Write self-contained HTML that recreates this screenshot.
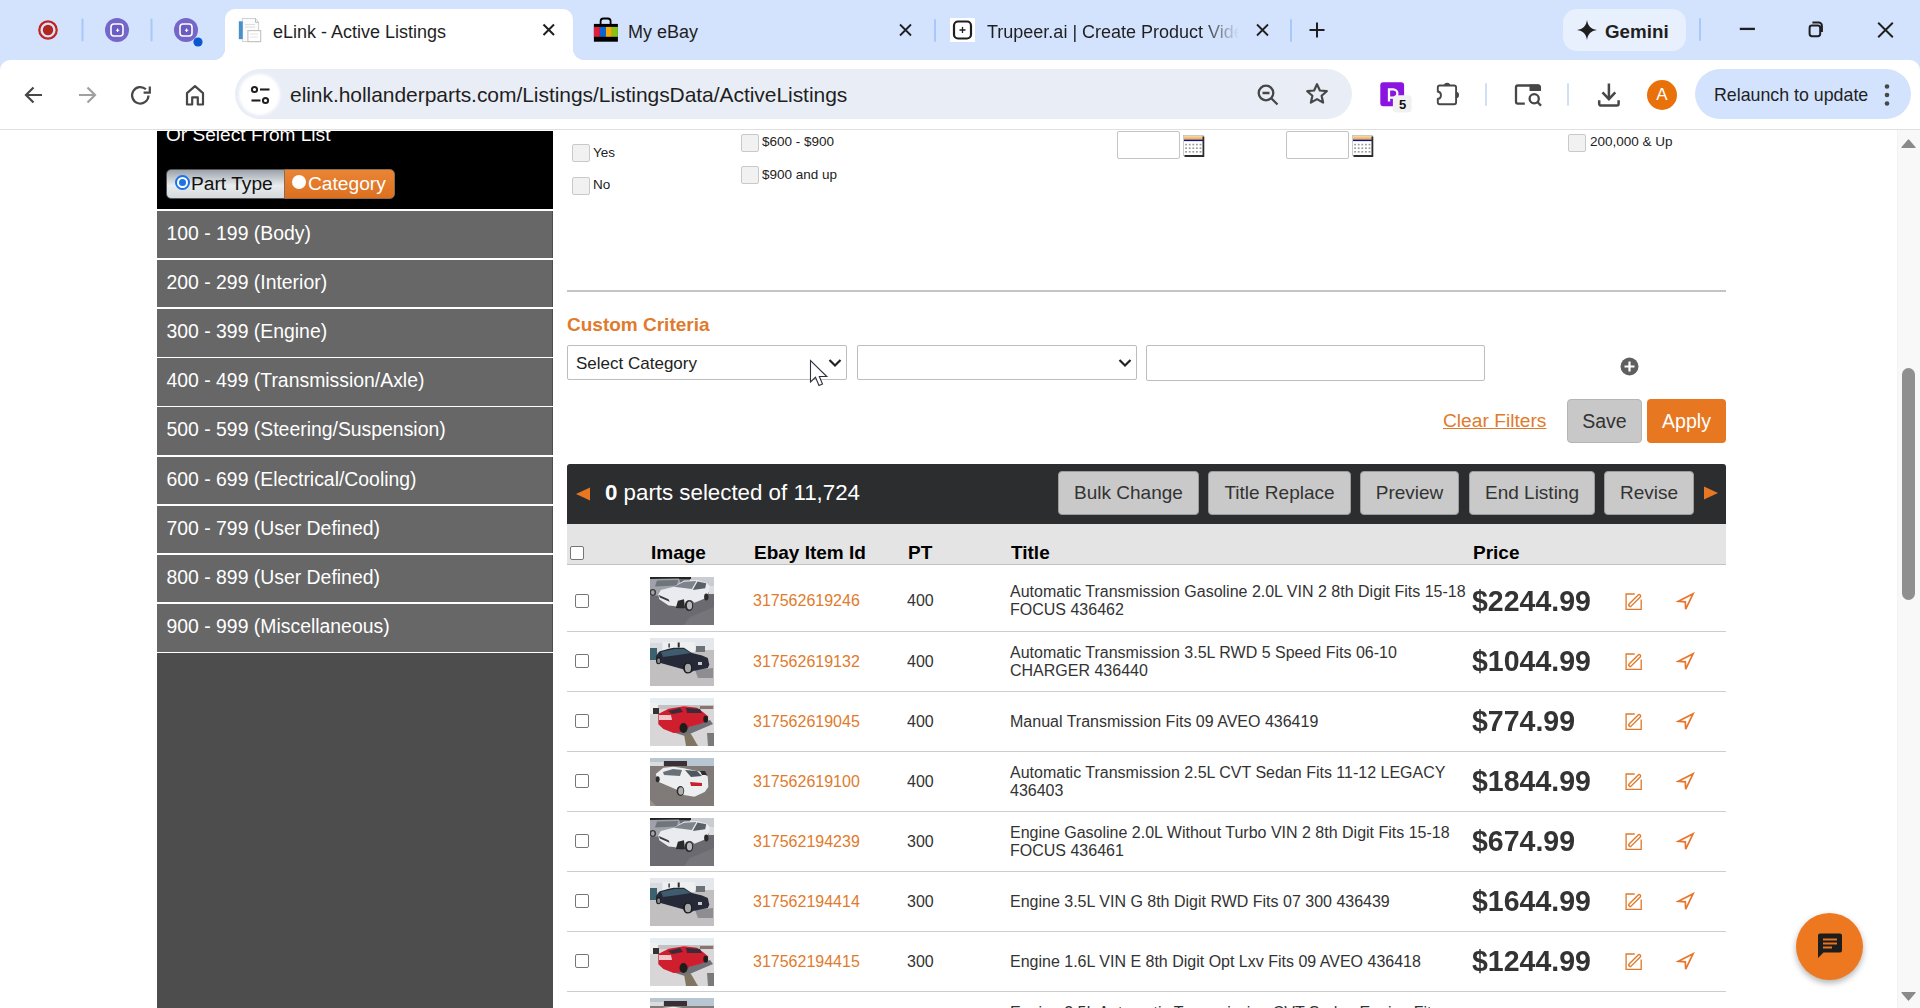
<!DOCTYPE html>
<html><head><meta charset="utf-8">
<style>
*{box-sizing:border-box;margin:0;padding:0}
html,body{width:1920px;height:1008px;overflow:hidden;background:#fff;font-family:"Liberation Sans",sans-serif}
.a{position:absolute}
#tabs{left:0;top:0;width:1920px;height:75px;background:#d3e3fd}
#toolbar{left:0;top:60px;width:1920px;height:70px;background:#fff;border-bottom:1px solid #e0e0e0;border-radius:10px 10px 0 0}
.ttl{font-size:17.5px;color:#1f1f1f;white-space:nowrap;line-height:20px}
.sep{width:2px;background:#a8c7fa;border-radius:1px}
#page{left:0;top:130px;width:1920px;height:878px;background:#fff;overflow:hidden}
.side{left:157px;width:396px}
.item{left:157px;width:395px;height:47px;background:#676767;color:#fff;font-size:19.4px;line-height:45px;padding-left:9.5px;white-space:nowrap}
.cb{width:18px;height:18px;border:1px solid #c9c9c9;background:#f1f1f1;border-radius:2px}
.sm{font-size:13.5px;color:#222;white-space:nowrap;line-height:16px}
.row{left:567px;width:1159px;border-bottom:1px solid #c8c8c8}
.rcb{width:14px;height:14px;border:1.5px solid #767676;border-radius:2px;background:#fff}
.pid{font-size:16px;color:#e07b2d;line-height:18px;white-space:nowrap}
.pt{font-size:16px;color:#333;line-height:18px}
.tt{font-size:16px;color:#333;line-height:18px;white-space:nowrap}
.pr{font-size:30px;font-weight:bold;color:#333;line-height:32px;white-space:nowrap;transform:scaleX(0.95);transform-origin:0 0}
.btn{height:44px;background:#c9c9c9;border:1px solid #9c9c9c;border-radius:4px;font-size:19px;color:#333;text-align:center;line-height:42px;white-space:nowrap}
.th{font-size:19px;font-weight:bold;color:#000;line-height:20px;white-space:nowrap}
</style></head><body>
<!-- TAB STRIP -->
<div id="tabs" class="a"></div>
<!-- active tab -->
<div class="a" style="left:225px;top:9px;width:348px;height:55px;background:#fff;border-radius:10px 10px 0 0"></div>
<div class="a" style="left:213px;top:48px;width:12px;height:12px;background:radial-gradient(circle at 0 0,#d3e3fd 12px,#fff 12.5px)"></div>
<div class="a" style="left:573px;top:48px;width:12px;height:12px;background:radial-gradient(circle at 100% 0,#d3e3fd 12px,#fff 12.5px)"></div>
<div id="toolbar" class="a"></div>

<!-- pinned tabs -->
<svg class="a" style="left:0;top:0" width="225" height="60">
  <circle cx="48" cy="30" r="8.7" fill="none" stroke="#c5221f" stroke-width="2.2"/>
  <circle cx="48" cy="30" r="5.2" fill="#b3261e"/>
  <rect x="81.5" y="18.5" width="2" height="23" rx="1" fill="#a8c7fa"/>
  <circle cx="117" cy="30" r="12" fill="#7467c9"/>
  <rect x="111" y="24" width="12" height="12" rx="3" fill="#6a5cc0" stroke="#fff" stroke-width="1.6"/>
  <path d="M117.6 28.6v3.4M115.9 30.3h3.4" stroke="#fff" stroke-width="1.1"/>
  <rect x="150.5" y="18.5" width="2" height="23" rx="1" fill="#a8c7fa"/>
  <circle cx="186" cy="30" r="12" fill="#7467c9"/>
  <rect x="180" y="24" width="12" height="12" rx="3" fill="#6a5cc0" stroke="#fff" stroke-width="1.6"/>
  <path d="M186.6 28.6v3.4M184.9 30.3h3.4" stroke="#fff" stroke-width="1.1"/>
  <circle cx="198" cy="42" r="4.6" fill="#0b57d0"/>
</svg>
<!-- active tab favicon -->
<svg class="a" style="left:236px;top:17px" width="28" height="28">
  <path d="M6.3 1.5H19.5L22.6 5.4V24.6H6.3z" fill="#fbfbfb" stroke="#c9c9c9" stroke-width="0.9"/>
  <path d="M19.5 1.5v3.9h3.1" fill="none" stroke="#b5b5b5" stroke-width="0.9"/>
  <path d="M9 7.5h10M9 10h10" stroke="#dedede" stroke-width="1.2"/>
  <rect x="2.3" y="3.8" width="5" height="18.8" fill="#e6f4fb"/>
  <rect x="2.9" y="4.3" width="3.9" height="17.8" fill="#4a90c8"/>
  <rect x="11.9" y="13.6" width="12.8" height="11" fill="#fff" stroke="#c2c2c2" stroke-width="1.1"/>
  <path d="M14 17h8M14 20h8" stroke="#e2e2e2" stroke-width="1"/>
</svg>
<div class="a ttl" style="left:273px;top:22px;font-size:18px">eLink - Active Listings</div>
<svg class="a" style="left:541px;top:22px" width="16" height="16"><path d="M2.5 2.5l10.5 10.5M13 2.5L2.5 13" stroke="#1f1f1f" stroke-width="2"/></svg>
<!-- my ebay tab -->
<svg class="a" style="left:592px;top:16px" width="28" height="28">
  <path d="M8.6 8.2V5.3a2.8 2.8 0 0 1 2.8-2.8h4.4a2.8 2.8 0 0 1 2.8 2.8v2.9" fill="none" stroke="#000" stroke-width="1.8"/>
  <rect x="1.9" y="7.9" width="24" height="17.8" fill="#000"/>
  <rect x="1.9" y="10.9" width="6" height="9.9" fill="#e0203a"/>
  <rect x="7.9" y="10.9" width="6" height="9.9" fill="#0a64d8"/>
  <rect x="13.9" y="10.9" width="6" height="9.9" fill="#f2ad0a"/>
  <rect x="19.9" y="10.9" width="6" height="9.9" fill="#86c21a"/>
</svg>
<div class="a ttl" style="left:628px;top:22px;font-size:18px">My eBay</div>
<svg class="a" style="left:898px;top:22px" width="16" height="16"><path d="M2 2.5l11 11M13 2.5L2 13.5" stroke="#1f1f1f" stroke-width="1.8"/></svg>
<div class="a sep" style="left:934px;top:19px;height:23px"></div>
<!-- trupeer tab -->
<svg class="a" style="left:950px;top:18px" width="26" height="25">
  <rect x="0" y="0" width="25" height="24" fill="#fff"/>
  <rect x="4" y="3.5" width="17" height="17" rx="4" fill="none" stroke="#1f1f1f" stroke-width="2.2"/>
  <path d="M12.5 9v6M9.5 12h6" stroke="#1f1f1f" stroke-width="1.3"/>
</svg>
<div class="a ttl" style="left:987px;top:22px;font-size:18px;width:252px;overflow:hidden;-webkit-mask-image:linear-gradient(90deg,#000 85%,transparent)">Trupeer.ai | Create Product Videos</div>
<svg class="a" style="left:1255px;top:22px" width="16" height="16"><path d="M2 2.5l11 11M13 2.5L2 13.5" stroke="#1f1f1f" stroke-width="1.8"/></svg>
<div class="a sep" style="left:1290px;top:19px;height:23px"></div>
<svg class="a" style="left:1308px;top:21px" width="18" height="18"><path d="M9 1.5v15M1.5 9h15" stroke="#1f1f1f" stroke-width="2"/></svg>
<!-- gemini -->
<div class="a" style="left:1563px;top:9px;width:123px;height:42px;border-radius:14px;background:#e8effd"></div>
<svg class="a" style="left:1576px;top:19px" width="22" height="22"><path d="M11 1 C11.8 7 15 10.2 21 11 C15 11.8 11.8 15 11 21 C10.2 15 7 11.8 1 11 C7 10.2 10.2 7 11 1Z" fill="#1f1f1f"/></svg>
<div class="a" style="left:1605px;top:21px;font-size:18.8px;font-weight:bold;color:#1f1f1f;line-height:22px">Gemini</div>
<div class="a sep" style="left:1699px;top:18px;height:23px"></div>
<svg class="a" style="left:1730px;top:12px" width="180" height="36">
  <path d="M9.8 16.9h15.1" stroke="#1f1f1f" stroke-width="2.3"/>
  <rect x="79.6" y="13.6" width="10.6" height="10.6" rx="2.4" fill="none" stroke="#1f1f1f" stroke-width="2"/>
  <path d="M82.4 10.6h6.3a3.2 3.2 0 0 1 3.2 3.2v6.3" fill="none" stroke="#1f1f1f" stroke-width="2"/>
  <path d="M148.2 10.8l14.6 14.4M162.8 10.8l-14.6 14.4" stroke="#1f1f1f" stroke-width="2"/>
</svg>
<!-- TOOLBAR icons -->
<svg class="a" style="left:0;top:60px" width="230" height="70">
  <path d="M42 35H26M33.5 27.5L26 35l7.5 7.5" fill="none" stroke="#474747" stroke-width="2.2"/>
  <path d="M79 35h16M87.5 27.5L95 35l-7.5 7.5" fill="none" stroke="#a0a0a0" stroke-width="2.2"/>
  <path d="M148.5 35.5a8.2 8.2 0 1 1 -2.6 -6.2" fill="none" stroke="#474747" stroke-width="2.2"/>
  <path d="M149.8 26.5v6.2h-6.2" fill="none" stroke="#474747" stroke-width="2.2"/>
  <path d="M187 44.5V33.2l8-7 8 7v11.3h-5.2v-7.2h-5.6v7.2z" fill="none" stroke="#474747" stroke-width="2.2" stroke-linejoin="round"/>
</svg>
<div class="a" style="left:235px;top:69px;width:1117px;height:50px;border-radius:25px;background:#e9eef6"></div>
<div class="a" style="left:241px;top:76px;width:37px;height:37px;border-radius:50%;background:#fff;box-shadow:0 0 3px 2px #fff"></div>
<svg class="a" style="left:250px;top:85px" width="24" height="22">
  <circle cx="4.5" cy="4.5" r="2.6" fill="none" stroke="#1f1f1f" stroke-width="2"/>
  <path d="M10 4.5h9.5" stroke="#1f1f1f" stroke-width="2.1"/>
  <circle cx="15.5" cy="15.5" r="2.6" fill="none" stroke="#1f1f1f" stroke-width="2"/>
  <path d="M1.5 15.5h9" stroke="#1f1f1f" stroke-width="2.1"/>
</svg>
<div class="a" style="left:290px;top:83px;font-size:21px;color:#1f1f1f;line-height:24px;white-space:nowrap;letter-spacing:-0.05px">elink.hollanderparts.com/Listings/ListingsData/ActiveListings</div>
<svg class="a" style="left:1254px;top:80px" width="80" height="30">
  <circle cx="12" cy="13" r="7.3" fill="none" stroke="#474747" stroke-width="2.3"/>
  <path d="M17.5 18.5l6 6M8.5 13h7" stroke="#474747" stroke-width="2.3"/>
  <path d="M63 4.2l2.9 6.3 6.9.7-5.2 4.6 1.5 6.8L63 19.1l-6.1 3.5 1.5-6.8-5.2-4.6 6.9-.7z" fill="none" stroke="#474747" stroke-width="2.2" stroke-linejoin="round"/>
</svg>
<!-- extensions -->
<svg class="a" style="left:1378px;top:80px" width="40" height="36">
  <rect x="2.3" y="2.3" width="23.8" height="24" rx="3" fill="#8a14e0"/>
  <path d="M11 21.5V9.3h4.2a4.2 4.2 0 0 1 0 8.4H11" fill="none" stroke="#fff" stroke-width="2.3"/>
  <rect x="14.9" y="15.3" width="18.8" height="17.2" rx="4" fill="#f1f1f1"/>
</svg>
<div class="a" style="left:1393px;top:97px;width:19px;font-size:13px;font-weight:bold;color:#111;text-align:center;line-height:16px">5</div>
<svg class="a" style="left:1430px;top:78px" width="36" height="34">
  <path d="M9.8 7.5H24.1a2 2 0 0 1 2 2V24.3a2 2 0 0 1-2 2H9.8a2 2 0 0 1-2-2V21a3.8 3.8 0 0 0 0-7.5V9.5a2 2 0 0 1 2-2z" fill="none" stroke="#474747" stroke-width="1.9"/>
  <path d="M14 7.8a3.1 3.1 0 0 1 6.2 0z" fill="#474747"/>
  <path d="M25.8 13.8a3.2 3.2 0 0 1 0 6.4z" fill="#474747"/>
</svg>
<div class="a" style="left:1485px;top:83px;width:2px;height:23px;border-radius:1px;background:#d0def6"></div>
<svg class="a" style="left:1512px;top:82px" width="34" height="28">
  <path d="M12.8 21.6H5.8a1.8 1.8 0 0 1-1.8-1.8V5.3a1.8 1.8 0 0 1 1.8-1.8h20.3a1.8 1.8 0 0 1 1.8 1.8v3.5" fill="none" stroke="#474747" stroke-width="2.3"/>
  <path d="M17.5 2.5h8.7a2.5 2.5 0 0 1 2.5 2.5v4h-11.2z" fill="#474747"/>
  <circle cx="22.2" cy="16.7" r="4.6" fill="none" stroke="#474747" stroke-width="2.3"/>
  <path d="M25.5 20l3.5 3.7" stroke="#474747" stroke-width="2.4"/>
</svg>
<div class="a" style="left:1567px;top:83px;width:2px;height:23px;border-radius:1px;background:#d0def6"></div>
<svg class="a" style="left:1594px;top:80px" width="30" height="30">
  <path d="M14.9 3.4v15.8M8.5 12.3l6.4 6.9 6.4-6.9" fill="none" stroke="#474747" stroke-width="2.5"/>
  <path d="M5.2 20.2v3.6a1.8 1.8 0 0 0 1.8 1.8h15.8a1.8 1.8 0 0 0 1.8-1.8v-3.6" fill="none" stroke="#474747" stroke-width="2.5"/>
</svg>
<div class="a" style="left:1647px;top:80px;width:30px;height:30px;border-radius:50%;background:#e8710a;color:#fff;font-size:17px;text-align:center;line-height:30px;-webkit-text-stroke:0px">A</div>
<div class="a" style="left:1695px;top:69px;width:216px;height:50px;border-radius:25px;background:#d3e3fd"></div>
<div class="a" style="left:1714px;top:83.5px;font-size:17.8px;color:#1f1f1f;line-height:22px;white-space:nowrap">Relaunch to update</div>
<svg class="a" style="left:1880px;top:80px" width="14" height="30"><circle cx="7" cy="6.5" r="2.3" fill="#474747"/><circle cx="7" cy="15" r="2.3" fill="#474747"/><circle cx="7" cy="23.5" r="2.3" fill="#474747"/></svg>


<!-- PAGE -->
<div id="page" class="a">
</div>
<!-- sidebar -->
<div class="a" style="left:157px;top:131px;width:396px;height:78px;background:#000;overflow:hidden"><div class="a" style="left:9px;top:-7px;font-size:19.1px;color:#fff;line-height:22px;white-space:nowrap">Or Select From List</div></div>
<div class="a" style="left:166px;top:169px;width:119px;height:30px;border-radius:5px 0 0 5px;background:linear-gradient(#9aa1a8,#e9ecee 55%,#d5d9dc);border:1px solid #555"></div>
<div class="a" style="left:284px;top:169px;width:111px;height:30px;border-radius:0 5px 5px 0;background:linear-gradient(#e98535,#dc7020);border:1px solid #8a6a50"></div>
<div class="a" style="left:175px;top:175px;width:15px;height:15px;border-radius:50%;background:#fff;border:2.5px solid #1a73e8"><div style="margin:1.5px;width:7px;height:7px;border-radius:50%;background:#1a73e8"></div></div>
<div class="a" style="left:191px;top:173px;font-size:19.2px;color:#111;line-height:22px">Part Type</div>
<div class="a" style="left:292px;top:175px;width:14px;height:14px;border-radius:50%;background:#fff"></div>
<div class="a" style="left:308px;top:173px;font-size:19.2px;color:#fff;line-height:22px">Category</div>
<div class="a" style="left:157px;top:209px;width:396px;height:2px;background:#fff"></div>
<div class="a" style="left:157px;top:211px;width:396px;height:797px;background:#4d4d4d"></div>
<div class="a item" style="top:211px;height:47px;line-height:45px">100 - 199 (Body)</div><div class="a" style="left:157px;top:258px;width:396px;height:2px;background:#fff"></div>
<div class="a item" style="top:260px;height:47px;line-height:45px">200 - 299 (Interior)</div><div class="a" style="left:157px;top:307px;width:396px;height:2px;background:#fff"></div>
<div class="a item" style="top:309px;height:48px;line-height:45px">300 - 399 (Engine)</div><div class="a" style="left:157px;top:357px;width:396px;height:1px;background:#fff"></div>
<div class="a item" style="top:358px;height:48px;line-height:45px">400 - 499 (Transmission/Axle)</div><div class="a" style="left:157px;top:406px;width:396px;height:1px;background:#fff"></div>
<div class="a item" style="top:407px;height:48px;line-height:45px">500 - 599 (Steering/Suspension)</div><div class="a" style="left:157px;top:455px;width:396px;height:2px;background:#fff"></div>
<div class="a item" style="top:457px;height:47px;line-height:45px">600 - 699 (Electrical/Cooling)</div><div class="a" style="left:157px;top:504px;width:396px;height:2px;background:#fff"></div>
<div class="a item" style="top:506px;height:47px;line-height:45px">700 - 799 (User Defined)</div><div class="a" style="left:157px;top:553px;width:396px;height:2px;background:#fff"></div>
<div class="a item" style="top:555px;height:47px;line-height:45px">800 - 899 (User Defined)</div><div class="a" style="left:157px;top:602px;width:396px;height:2px;background:#fff"></div>
<div class="a item" style="top:604px;height:48px;line-height:45px">900 - 999 (Miscellaneous)</div><div class="a" style="left:157px;top:652px;width:396px;height:1px;background:#fff"></div>


<!-- filter top -->
<div class="a cb" style="left:572px;top:144px"></div><div class="a sm" style="left:593px;top:145px">Yes</div>
<div class="a cb" style="left:572px;top:177px"></div><div class="a sm" style="left:593px;top:177px">No</div>
<div class="a cb" style="left:741px;top:134px"></div><div class="a sm" style="left:762px;top:134px">$600 - $900</div>
<div class="a cb" style="left:741px;top:166px"></div><div class="a sm" style="left:762px;top:167px">$900 and up</div>
<div class="a" style="left:1117px;top:131px;width:63px;height:28px;border:1px solid #c4c4c4;border-radius:2px;background:#fff"></div>
<div class="a" style="left:1286px;top:131px;width:63px;height:28px;border:1px solid #c4c4c4;border-radius:2px;background:#fff"></div>
<svg class="a" style="left:1183px;top:135px" width="22" height="22"><defs><linearGradient id="cg" x1="0" y1="0" x2="0" y2="1"><stop offset="0" stop-color="#f8dca0"/><stop offset="1" stop-color="#eea548"/></linearGradient></defs><rect x="0.5" y="0.5" width="20" height="20" fill="#fff" stroke="#bdbdbd" stroke-width="0.8"/><rect x="1" y="1" width="19" height="3.6" fill="url(#cg)"/><rect x="1" y="4.6" width="19" height="1.5" fill="#10108a"/><rect x="2.2" y="8.8" width="1.8" height="1.6" fill="#9a9a9a"/><rect x="2.2" y="12.4" width="1.8" height="1.6" fill="#9a9a9a"/><rect x="2.2" y="16" width="1.8" height="1.6" fill="#9a9a9a"/><rect x="5.8" y="8.8" width="1.8" height="1.6" fill="#9a9a9a"/><rect x="5.8" y="12.4" width="1.8" height="1.6" fill="#9a9a9a"/><rect x="5.8" y="16" width="1.8" height="1.6" fill="#9a9a9a"/><rect x="9.4" y="8.8" width="1.8" height="1.6" fill="#9a9a9a"/><rect x="9.4" y="12.4" width="1.8" height="1.6" fill="#9a9a9a"/><rect x="9.4" y="16" width="1.8" height="1.6" fill="#9a9a9a"/><rect x="13" y="8.8" width="1.8" height="1.6" fill="#9a9a9a"/><rect x="13" y="12.4" width="1.8" height="1.6" fill="#9a9a9a"/><rect x="13" y="16" width="1.8" height="1.6" fill="#9a9a9a"/><rect x="16.6" y="8.8" width="1.8" height="1.6" fill="#9a9a9a"/><rect x="16.6" y="12.4" width="1.8" height="1.6" fill="#9a9a9a"/><rect x="16.6" y="16" width="1.8" height="1.6" fill="#9a9a9a"/><path d="M20.4 1.5v19.5H1.5" fill="none" stroke="#2e2e2e" stroke-width="1.8"/></svg>
<svg class="a" style="left:1352px;top:135px" width="22" height="22"><defs><linearGradient id="cg" x1="0" y1="0" x2="0" y2="1"><stop offset="0" stop-color="#f8dca0"/><stop offset="1" stop-color="#eea548"/></linearGradient></defs><rect x="0.5" y="0.5" width="20" height="20" fill="#fff" stroke="#bdbdbd" stroke-width="0.8"/><rect x="1" y="1" width="19" height="3.6" fill="url(#cg)"/><rect x="1" y="4.6" width="19" height="1.5" fill="#10108a"/><rect x="2.2" y="8.8" width="1.8" height="1.6" fill="#9a9a9a"/><rect x="2.2" y="12.4" width="1.8" height="1.6" fill="#9a9a9a"/><rect x="2.2" y="16" width="1.8" height="1.6" fill="#9a9a9a"/><rect x="5.8" y="8.8" width="1.8" height="1.6" fill="#9a9a9a"/><rect x="5.8" y="12.4" width="1.8" height="1.6" fill="#9a9a9a"/><rect x="5.8" y="16" width="1.8" height="1.6" fill="#9a9a9a"/><rect x="9.4" y="8.8" width="1.8" height="1.6" fill="#9a9a9a"/><rect x="9.4" y="12.4" width="1.8" height="1.6" fill="#9a9a9a"/><rect x="9.4" y="16" width="1.8" height="1.6" fill="#9a9a9a"/><rect x="13" y="8.8" width="1.8" height="1.6" fill="#9a9a9a"/><rect x="13" y="12.4" width="1.8" height="1.6" fill="#9a9a9a"/><rect x="13" y="16" width="1.8" height="1.6" fill="#9a9a9a"/><rect x="16.6" y="8.8" width="1.8" height="1.6" fill="#9a9a9a"/><rect x="16.6" y="12.4" width="1.8" height="1.6" fill="#9a9a9a"/><rect x="16.6" y="16" width="1.8" height="1.6" fill="#9a9a9a"/><path d="M20.4 1.5v19.5H1.5" fill="none" stroke="#2e2e2e" stroke-width="1.8"/></svg>
<div class="a cb" style="left:1568px;top:134px"></div><div class="a sm" style="left:1590px;top:134px">200,000 &amp; Up</div>
<div class="a" style="left:567px;top:290px;width:1159px;height:2px;background:#c4c4c4"></div>
<!-- custom criteria -->
<div class="a" style="left:567px;top:314px;font-size:19px;font-weight:bold;color:#e07b2d;line-height:22px;white-space:nowrap">Custom Criteria</div>
<div class="a" style="left:567px;top:345px;width:280px;height:35px;border:1px solid #bdbdbd;border-radius:2px;background:#fff"></div>
<div class="a" style="left:576px;top:354px;font-size:17px;color:#222;line-height:20px;white-space:nowrap">Select Category</div>
<svg class="a" style="left:825.5px;top:356px" width="18" height="14"><path d="M3.5 4l5.5 5.5 5.5-5.5" fill="none" stroke="#222" stroke-width="2.2"/></svg>
<div class="a" style="left:857px;top:345px;width:280px;height:35px;border:1px solid #bdbdbd;border-radius:2px;background:#fff"></div>
<svg class="a" style="left:1115.5px;top:356px" width="18" height="14"><path d="M3.5 4l5.5 5.5 5.5-5.5" fill="none" stroke="#222" stroke-width="2.2"/></svg>
<div class="a" style="left:1146px;top:345px;width:339px;height:36px;border:1px solid #bdbdbd;border-radius:2px;background:#fff"></div>
<svg class="a" style="left:1619px;top:356px" width="22" height="22"><circle cx="10.5" cy="10.5" r="9" fill="#5f5f5f"/><path d="M10.5 5.5v10M5.5 10.5h10" stroke="#fff" stroke-width="2.2"/></svg>
<div class="a" style="left:1443px;top:410px;font-size:19.2px;color:#e07b2d;line-height:22px;text-decoration:underline;white-space:nowrap">Clear Filters</div>
<div class="a" style="left:1567px;top:399px;width:75px;height:44px;border-radius:4px;background:#c8c8c8;border:1px solid #b5b5b5;font-size:19.5px;color:#333;text-align:center;line-height:42px">Save</div>
<div class="a" style="left:1647px;top:399px;width:79px;height:44px;border-radius:4px;background:#e87722;font-size:19.5px;color:#fff;text-align:center;line-height:44px">Apply</div>
<!-- dark bar -->
<div class="a" style="left:567px;top:464px;width:1159px;height:60px;background:#2c2d2f;border-radius:3px 3px 0 0"></div>
<svg class="a" style="left:574px;top:486px" width="18" height="16"><path d="M2 8L16 1.5v13z" fill="#e87722"/></svg>
<div class="a" style="left:605px;top:480px;font-size:22.3px;color:#fff;line-height:26px;white-space:nowrap"><b>0</b> parts selected of 11,724</div>
<div class="a btn" style="left:1058px;top:471px;width:141px">Bulk Change</div>
<div class="a btn" style="left:1208px;top:471px;width:143px">Title Replace</div>
<div class="a btn" style="left:1360px;top:471px;width:99px">Preview</div>
<div class="a btn" style="left:1469px;top:471px;width:126px">End Listing</div>
<div class="a btn" style="left:1604px;top:471px;width:90px">Revise</div>
<svg class="a" style="left:1702px;top:485px" width="18" height="16"><path d="M16 8L2 1.5v13z" fill="#e87722"/></svg>
<!-- header -->
<div class="a" style="left:567px;top:524px;width:1159px;height:41px;background:#e4e4e4;border-bottom:1px solid #c2c2c2"></div>
<div class="a" style="left:570px;top:546px;width:14px;height:14px;border:1.5px solid #767676;border-radius:2px;background:#fff"></div>
<div class="a th" style="left:651px;top:543px">Image</div>
<div class="a th" style="left:754px;top:543px">Ebay Item Id</div>
<div class="a th" style="left:908px;top:543px">PT</div>
<div class="a th" style="left:1011px;top:543px">Title</div>
<div class="a th" style="left:1473px;top:543px">Price</div>


<svg width="0" height="0" style="position:absolute">
<defs>
<symbol id="tA" viewBox="0 0 64 48">
  <rect width="64" height="48" fill="#6b6a70"/>
  <rect x="40" y="0" width="24" height="15" fill="#c9ccd0"/>
  <rect x="0" y="0" width="41" height="2" fill="#222"/>
  <path d="M0 2L29 1.5 31 7 30 16 8 18.5 0 19z" fill="#9da3a8"/>
  <path d="M7 3.5L28 3 27 8.5 5 9.5z" fill="#6f757b"/>
  <ellipse cx="2.8" cy="15.5" rx="3.3" ry="3.6" fill="#3b3b3b"/><ellipse cx="2.8" cy="15.5" rx="1.8" ry="2.2" fill="#a0a4a8"/>
  <path d="M59 9h5v8h-5z" fill="#dcdde0"/>
  <path d="M8.3 17.5L10.8 12.9 23.7 9.8 34 3.6 46.9 3.1 56.8 5.7 59.9 9.3 58.8 14.9 57.3 20.6 44.4 25.8 40.8 22.7 37.1 26.8 35.1 31.5 23.7 28.9 18.6 28.4 9.3 22.2z" fill="#e9ebee"/>
  <path d="M23.7 9.8L34 4.8 46.4 4.1 41.8 11.9z" fill="#7d848b"/>
  <path d="M42.8 13L47.5 4.6 56.2 6.2 55.2 11.3z" fill="#5a6068"/>
  <path d="M8.8 18L18.6 22.2 19.6 24.8 9.8 20.6z" fill="#3a3c40"/>
  <path d="M27.9 23.7L34 22.2 35.1 31.5 25.8 31z" fill="#2a2a2c"/>
  <ellipse cx="39" cy="28.5" rx="4.2" ry="5.6" fill="#2a2a2a"/><ellipse cx="39.5" cy="28.5" rx="2.6" ry="4" fill="#b8babd"/>
  <ellipse cx="56.3" cy="20" rx="2.2" ry="3.4" fill="#2a2a2a"/>
  <path d="M40 40L64 30V48H34z" fill="#76757a"/>
</symbol>
<symbol id="tB" viewBox="0 0 64 48">
  <rect width="64" height="48" fill="#c2bfc0"/>
  <rect width="64" height="12" fill="#e4e8ec"/>
  <rect x="13" y="4" width="32" height="10" fill="#eef0f0"/>
  <rect x="27.7" y="4.5" width="2" height="5" fill="#2a2a2a"/><rect x="18.4" y="5.5" width="1.4" height="4" fill="#333"/>
  <rect x="0" y="5" width="12" height="9" fill="#d8dbdd"/>
  <path d="M46 8h9v6h-9z" fill="#6d7074"/>
  <path d="M0 10h7v12H0z" fill="#3c6270"/>
  <path d="M45 32L63 30V40H48z" fill="#8e8d92"/>
  <path d="M5.7 18.6L9.3 13.4 18.6 10.8 23.7 9.8 34 9.8 41.8 15 52.1 17.5 57.8 20.1 59.3 26.8 57.8 29.9 43.3 33 40.2 35.1 34 31.5 11.4 25.3 6.7 22.7z" fill="#262938"/>
  <path d="M11 14L24 11 34 11 41 15 28 17 13 19z" fill="#3f5c6e"/>
  <path d="M48 24h4v3h-4z" fill="#c9c9c9"/>
  <ellipse cx="37.7" cy="30" rx="4.6" ry="5.6" fill="#1b1b1b"/><ellipse cx="38" cy="30" rx="3.1" ry="4.2" fill="#a4a6aa"/>
  <ellipse cx="8.5" cy="22.7" rx="2.5" ry="3.6" fill="#1b1b1b"/><ellipse cx="8.7" cy="22.7" rx="1.5" ry="2.5" fill="#8a8a8a"/>
</symbol>
<symbol id="tC" viewBox="0 0 64 48">
  <rect width="64" height="48" fill="#d8d6d6"/>
  <rect width="64" height="8" fill="#e6eef2"/>
  <rect y="7" width="64" height="4" fill="#c4c1c0"/>
  <path d="M0 5h8v11H0z" fill="#f0f0f0"/><path d="M3 10h6v6H3z" fill="#333"/>
  <path d="M50 8h13v3H50z" fill="#8a7575"/>
  <path d="M22 34L60 22 63 26 35 38z" fill="#6f7078"/>
  <path d="M34 36h7l7 12H36z" fill="#807560"/>
  <path d="M57 35h7v13h-6z" fill="#7a7a7a"/>
  <path d="M8.3 16L18.6 10.8 34 8.3 46.9 9.8 53.6 14.4 58.3 18.6 57.3 23.7 39.2 28.9 34 34 23.7 35.1 13.4 30.9 8.3 26.3z" fill="#cf1e2e"/>
  <path d="M18 13L30 10 33 14 22 16z" fill="#3a2a3a"/><path d="M36 10L50 11 52 15 37 15z" fill="#3b2a38"/>
  <path d="M9 17h12l1 5H9z" fill="#f2c6c8"/>
  <ellipse cx="33.5" cy="30" rx="4" ry="5" fill="#1d1d1d"/>
  <ellipse cx="55.7" cy="21.2" rx="2.4" ry="3.4" fill="#1d1d1d"/>
</symbol>
<symbol id="tD" viewBox="0 0 64 48">
  <rect width="64" height="48" fill="#807a78"/>
  <rect width="64" height="8" fill="#b8c6d4"/>
  <path d="M14 3h23v5H14z" fill="#3a2f35"/>
  <path d="M0 4h13v4H0z" fill="#dcdcdc"/>
  <path d="M0 42l6 6H0z" fill="#9a9490"/>
  <path d="M5.7 16L13.4 9.8 23.7 8.8 34 10.3 49.5 13.4 57.8 18.6 58.3 28.9 54.7 34 44.4 38.7 34 37.1 26.3 31.5 8.3 23.7z" fill="#eceef0"/>
  <path d="M13 14L23 11 32 12 30 18 14 17z" fill="#6a7078"/>
  <path d="M35 12L47 13 52 18 41 19z" fill="#4e5660"/>
  <path d="M40 24L52 25 52 28 41 28z" fill="#c8202e"/>
  <path d="M50 13h5l2 4h-5z" fill="#2d2d2d"/>
  <ellipse cx="30.4" cy="33" rx="3.8" ry="5" fill="#2c2c2c"/><ellipse cx="30.8" cy="33" rx="2.6" ry="3.8" fill="#b0b0b0"/>
  <ellipse cx="7.7" cy="21.2" rx="2" ry="3" fill="#2c2c2c"/>
</symbol>
<symbol id="edit" viewBox="0 0 19 19">
  <path d="M10.7 2H2.1V17.3H17.2V7.6" fill="none" stroke="#e07b2d" stroke-width="1.35"/>
  <path d="M6.1 13.1L15.2 4" stroke="#e07b2d" stroke-width="4.3" stroke-linecap="round"/>
  <path d="M6.3 12.9L15.2 4" stroke="#fff" stroke-width="1.5" stroke-linecap="round"/>
</symbol>
<symbol id="send" viewBox="0 0 19 19">
  <path d="M17.1 1.7L2.4 9.3 9.3 9.8 9.7 17.2z" fill="none" stroke="#e8762a" stroke-width="1.7" stroke-linejoin="miter"/>
</symbol>
</defs>
</svg>
<div class="a rcb" style="left:575px;top:594px"></div>
<svg class="a" style="left:650px;top:577px;filter:blur(0.35px)" width="64" height="48"><use href="#tA"/></svg>
<div class="a pid" style="left:753px;top:592px">317562619246</div>
<div class="a pt" style="left:907px;top:592px">400</div>
<div class="a tt" style="left:1010px;top:583px;line-height:18px">Automatic Transmission Gasoline 2.0L VIN 2 8th Digit Fits 15-18<br>FOCUS 436462</div>
<div class="a pr" style="left:1472px;top:585px">$2244.99</div>
<svg class="a" style="left:1624px;top:592px" width="19" height="19"><use href="#edit"/></svg>
<svg class="a" style="left:1676px;top:592px" width="19" height="19"><use href="#send"/></svg>
<div class="a" style="left:567px;top:631px;width:1159px;height:1px;background:#cdcdcd"></div>
<div class="a rcb" style="left:575px;top:654px"></div>
<svg class="a" style="left:650px;top:638px;filter:blur(0.35px)" width="64" height="48"><use href="#tB"/></svg>
<div class="a pid" style="left:753px;top:653px">317562619132</div>
<div class="a pt" style="left:907px;top:653px">400</div>
<div class="a tt" style="left:1010px;top:644px;line-height:18px">Automatic Transmission 3.5L RWD 5 Speed Fits 06-10<br>CHARGER 436440</div>
<div class="a pr" style="left:1472px;top:645px">$1044.99</div>
<svg class="a" style="left:1624px;top:652px" width="19" height="19"><use href="#edit"/></svg>
<svg class="a" style="left:1676px;top:652px" width="19" height="19"><use href="#send"/></svg>
<div class="a" style="left:567px;top:691px;width:1159px;height:1px;background:#cdcdcd"></div>
<div class="a rcb" style="left:575px;top:714px"></div>
<svg class="a" style="left:650px;top:698px;filter:blur(0.35px)" width="64" height="48"><use href="#tC"/></svg>
<div class="a pid" style="left:753px;top:713px">317562619045</div>
<div class="a pt" style="left:907px;top:713px">400</div>
<div class="a tt" style="left:1010px;top:713px">Manual Transmission Fits 09 AVEO 436419</div>
<div class="a pr" style="left:1472px;top:705px">$774.99</div>
<svg class="a" style="left:1624px;top:712px" width="19" height="19"><use href="#edit"/></svg>
<svg class="a" style="left:1676px;top:712px" width="19" height="19"><use href="#send"/></svg>
<div class="a" style="left:567px;top:751px;width:1159px;height:1px;background:#cdcdcd"></div>
<div class="a rcb" style="left:575px;top:774px"></div>
<svg class="a" style="left:650px;top:758px;filter:blur(0.35px)" width="64" height="48"><use href="#tD"/></svg>
<div class="a pid" style="left:753px;top:773px">317562619100</div>
<div class="a pt" style="left:907px;top:773px">400</div>
<div class="a tt" style="left:1010px;top:764px;line-height:18px">Automatic Transmission 2.5L CVT Sedan Fits 11-12 LEGACY<br>436403</div>
<div class="a pr" style="left:1472px;top:765px">$1844.99</div>
<svg class="a" style="left:1624px;top:772px" width="19" height="19"><use href="#edit"/></svg>
<svg class="a" style="left:1676px;top:772px" width="19" height="19"><use href="#send"/></svg>
<div class="a" style="left:567px;top:811px;width:1159px;height:1px;background:#cdcdcd"></div>
<div class="a rcb" style="left:575px;top:834px"></div>
<svg class="a" style="left:650px;top:818px;filter:blur(0.35px)" width="64" height="48"><use href="#tA"/></svg>
<div class="a pid" style="left:753px;top:833px">317562194239</div>
<div class="a pt" style="left:907px;top:833px">300</div>
<div class="a tt" style="left:1010px;top:824px;line-height:18px">Engine Gasoline 2.0L Without Turbo VIN 2 8th Digit Fits 15-18<br>FOCUS 436461</div>
<div class="a pr" style="left:1472px;top:825px">$674.99</div>
<svg class="a" style="left:1624px;top:832px" width="19" height="19"><use href="#edit"/></svg>
<svg class="a" style="left:1676px;top:832px" width="19" height="19"><use href="#send"/></svg>
<div class="a" style="left:567px;top:871px;width:1159px;height:1px;background:#cdcdcd"></div>
<div class="a rcb" style="left:575px;top:894px"></div>
<svg class="a" style="left:650px;top:878px;filter:blur(0.35px)" width="64" height="48"><use href="#tB"/></svg>
<div class="a pid" style="left:753px;top:893px">317562194414</div>
<div class="a pt" style="left:907px;top:893px">300</div>
<div class="a tt" style="left:1010px;top:893px">Engine 3.5L VIN G 8th Digit RWD Fits 07 300 436439</div>
<div class="a pr" style="left:1472px;top:885px">$1644.99</div>
<svg class="a" style="left:1624px;top:892px" width="19" height="19"><use href="#edit"/></svg>
<svg class="a" style="left:1676px;top:892px" width="19" height="19"><use href="#send"/></svg>
<div class="a" style="left:567px;top:931px;width:1159px;height:1px;background:#cdcdcd"></div>
<div class="a rcb" style="left:575px;top:954px"></div>
<svg class="a" style="left:650px;top:938px;filter:blur(0.35px)" width="64" height="48"><use href="#tC"/></svg>
<div class="a pid" style="left:753px;top:953px">317562194415</div>
<div class="a pt" style="left:907px;top:953px">300</div>
<div class="a tt" style="left:1010px;top:953px">Engine 1.6L VIN E 8th Digit Opt Lxv Fits 09 AVEO 436418</div>
<div class="a pr" style="left:1472px;top:945px">$1244.99</div>
<svg class="a" style="left:1624px;top:952px" width="19" height="19"><use href="#edit"/></svg>
<svg class="a" style="left:1676px;top:952px" width="19" height="19"><use href="#send"/></svg>
<div class="a" style="left:567px;top:991px;width:1159px;height:1px;background:#cdcdcd"></div>
<div class="a rcb" style="left:575px;top:1014px"></div>
<svg class="a" style="left:650px;top:998px;filter:blur(0.35px)" width="64" height="48"><use href="#tD"/></svg>
<div class="a pid" style="left:753px;top:1013px">317562194416</div>
<div class="a pt" style="left:907px;top:1013px">300</div>
<div class="a tt" style="left:1010px;top:1004px;line-height:18px">Engine 2.5L Automatic Transmission CVT Sedan Engine Fits<br>11-12 LEGACY 436402</div>
<div class="a pr" style="left:1472px;top:1005px">$1544.99</div>
<svg class="a" style="left:1624px;top:1012px" width="19" height="19"><use href="#edit"/></svg>
<svg class="a" style="left:1676px;top:1012px" width="19" height="19"><use href="#send"/></svg>
<div class="a" style="left:567px;top:1051px;width:1159px;height:1px;background:#cdcdcd"></div>
<!-- scrollbar -->
<div class="a" style="left:1897px;top:130px;width:23px;height:878px;background:#f8f8f8;border-left:1px solid #f3f3f3"></div>
<svg class="a" style="left:1899px;top:136px" width="20" height="14"><path d="M3 11.5L9.5 4 16 11.5z" fill="#8a8a8a" stroke="#8a8a8a" stroke-width="1.2" stroke-linejoin="round"/></svg>
<div class="a" style="left:1902px;top:368px;width:13px;height:232px;border-radius:6.5px;background:#8f8f8f"></div>
<svg class="a" style="left:1899px;top:990px" width="20" height="14"><path d="M3 2.5L9.5 10 16 2.5z" fill="#8a8a8a" stroke="#8a8a8a" stroke-width="1.2" stroke-linejoin="round"/></svg>
<!-- chat -->
<div class="a" style="left:1796px;top:913px;width:67px;height:67px;border-radius:50%;background:#ee7820;box-shadow:0 3px 6px rgba(0,0,0,.3)"></div>
<svg class="a" style="left:1815px;top:931px" width="30" height="30"><path d="M3 4.5a2 2 0 0 1 2-2h20a2 2 0 0 1 2 2v15a2 2 0 0 1-2 2H8.5L3 27z" fill="#1d1d1d"/><path d="M8 8.5h14M8 12.5h14M8 16.5h9" stroke="#e8741e" stroke-width="2.2"/></svg>
<!-- cursor -->
<svg class="a" style="left:809px;top:359px" width="22" height="30"><path d="M1.5 1.5V23l5-4.7 3.5 8.2 3.5-1.5-3.2-7.5h7.5z" fill="#fff" stroke="#303040" stroke-width="1.1" stroke-linejoin="miter"/></svg>

</body></html>
